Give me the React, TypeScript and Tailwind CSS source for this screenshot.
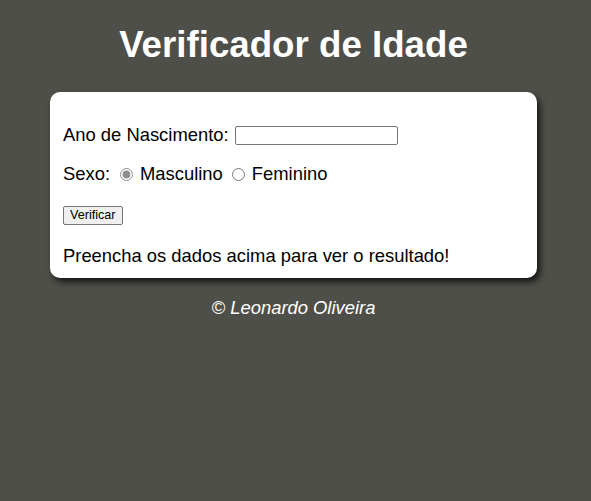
import { useState } from 'react'

function App() {
  const [ano, setAno] = useState('')
  const [sexo, setSexo] = useState('masculino')
  const [resultado, setResultado] = useState('Preencha os dados acima para ver o resultado!')

  const verificar = () => {
    const n = Number(ano)
    const atual = new Date().getFullYear()
    if (!ano || n > atual) {
      setResultado('[ERRO] Verifique os dados e tente novamente!')
      return
    }
    const idade = atual - n
    setResultado(`Detectamos ${sexo === 'masculino' ? 'Homem' : 'Mulher'} com ${idade} anos.`)
  }

  return (
    <div className="min-h-screen bg-[#4f4f49] font-['Liberation_Sans',Arial,sans-serif] pt-[24px]">
      <h1 className="mr-[4px] text-center text-[36.7px] font-bold leading-[41px] text-white">
        Verificador de Idade
      </h1>

      <section className="mt-[27px] ml-[50px] w-[487px] rounded-[10px] bg-white px-[13px] pt-[32px] pb-[12px] text-[18.4px] text-black shadow-[3px_4px_6px_rgba(0,0,0,0.75)]">
        <div className="flex h-[22px] items-center gap-[6px]">
          <label htmlFor="ano">Ano de Nascimento:</label>
          <input
            id="ano"
            type="number"
            value={ano}
            onChange={(e) => setAno(e.target.value)}
            className="h-[19px] w-[163px] rounded-[2px] border border-[#767676] px-[2px] text-[13px] outline-none [appearance:textfield]"
          />
        </div>

        <div className="mt-[17px] flex h-[22px] items-center">
          <span>Sexo:</span>
          <input
            id="masc"
            type="radio"
            name="sexo"
            checked={sexo === 'masculino'}
            onChange={() => setSexo('masculino')}
            className="ml-[10px] h-[13px] w-[13px] accent-[#8f8f8f]"
          />
          <label htmlFor="masc" className="ml-[7px]">Masculino</label>
          <input
            id="fem"
            type="radio"
            name="sexo"
            checked={sexo === 'feminino'}
            onChange={() => setSexo('feminino')}
            className="ml-[9px] h-[13px] w-[13px] accent-[#8f8f8f]"
          />
          <label htmlFor="fem" className="ml-[7px]">Feminino</label>
        </div>

        <button
          onClick={verificar}
          className="mt-[21px] block h-[19px] rounded-[2px] border border-[#767676] bg-[#efefef] px-[6px] text-[12.6px] leading-[17px] text-black"
        >
          Verificar
        </button>

        <div className="mt-[20px] leading-[21px]">{resultado}</div>
      </section>

      <p className="mt-[19px] mr-[4px] text-center text-[18.4px] italic leading-[21px] text-white">
        &copy; Leonardo Oliveira
      </p>
    </div>
  )
}

export default App
